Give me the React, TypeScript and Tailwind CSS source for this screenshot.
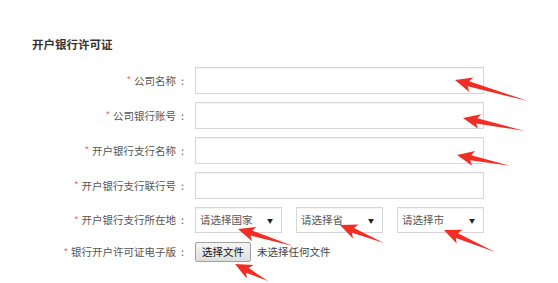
import React from "react";

const font = { fontFamily: '"Microsoft YaHei", "Noto Sans CJK SC", "Noto Sans", sans-serif' };

function Arrow({ tip, tail }: { tip: [number, number]; tail: [number, number] }) {
  const dx = tail[0] - tip[0];
  const dy = tail[1] - tip[1];
  const L = Math.sqrt(dx * dx + dy * dy);
  const ang = (Math.atan2(dy, dx) * 180) / Math.PI;
  const pts = `0,0 17,-7.5 14,-2.6 ${L},0 14,2.6 17,7.5`;
  return (
    <polygon
      points={pts}
      fill="#f22d24"
      transform={`translate(${tip[0]} ${tip[1]}) rotate(${ang})`}
    />
  );
}

function Label({ text }: { text: string }) {
  return (
    <div className="w-[152px] shrink-0 flex justify-end items-center text-[10.5px] text-[#555] whitespace-nowrap">
      <span className="text-[#f06b6b] text-[10px] mr-[3px] relative top-[-1px]">*</span>
      <span>{text}</span>
      <span className="ml-[5px]">:</span>
    </div>
  );
}

function Select({ text }: { text: string }) {
  return (
    <div className="w-[87px] h-[26px] border border-[#d6d6d6] shadow-[inset_0_1px_1px_rgba(0,0,0,0.05)] flex items-center justify-between pl-[4px] pr-[8px] text-[10.5px] text-[#555]">
      <span>{text}</span>
      <span className="text-[6px] text-[#222]">▼</span>
    </div>
  );
}

export default function App() {
  const inputs = ["公司名称", "公司银行账号", "开户银行支行名称", "开户银行支行联行号"];
  return (
    <div className="relative w-[558px] h-[283px] bg-white overflow-hidden" style={font}>
      <div className="pl-[32px] pt-[36px]">
        <div className="text-[11.5px] font-bold text-[#333] leading-[16px]">开户银行许可证</div>
        <div className="mt-[15px] flex flex-col gap-[8px]">
          {inputs.map((t) => (
            <div key={t} className="flex items-center">
              <Label text={t} />
              <div className="ml-[11px] w-[289px] h-[27px] border border-[#d6d6d6] shadow-[inset_0_1px_1px_rgba(0,0,0,0.05)]" />
            </div>
          ))}
          <div className="flex items-center">
            <Label text="开户银行支行所在地" />
            <div className="ml-[11px] flex gap-[14px]">
              <Select text="请选择国家" />
              <Select text="请选择省" />
              <Select text="请选择市" />
            </div>
          </div>
          <div className="flex items-center mt-[1px]">
            <Label text="银行开户许可证电子版" />
            <div className="ml-[11px] flex items-center">
              <div className="h-[20px] px-[6px] flex items-center border border-[#a0a0a0] rounded-[2px] bg-gradient-to-b from-[#f6f6f6] to-[#dedede] text-[10.5px] text-[#111]">
                选择文件
              </div>
              <span className="ml-[6px] text-[10.5px] text-[#444]">未选择任何文件</span>
            </div>
          </div>
        </div>
      </div>
      <svg className="absolute inset-0 pointer-events-none" width="558" height="283">
        <Arrow tip={[455, 80]} tail={[528, 101]} />
        <Arrow tip={[463, 118]} tail={[525, 131]} />
        <Arrow tip={[457, 155]} tail={[511, 166]} />
        <Arrow tip={[238, 229]} tail={[293, 246]} />
        <Arrow tip={[340, 225]} tail={[384, 243]} />
        <Arrow tip={[444, 230]} tail={[495, 252]} />
        <Arrow tip={[235, 264]} tail={[268, 281]} />
      </svg>
    </div>
  );
}
